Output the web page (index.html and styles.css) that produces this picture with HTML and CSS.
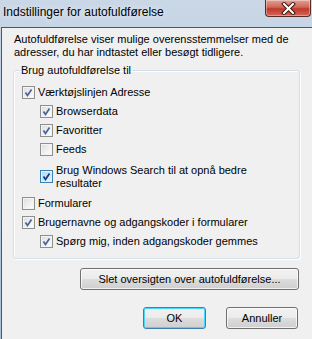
FILE: index.html
```html
<!DOCTYPE html>
<html lang="da">
<head>
  <meta charset="UTF-8">
  <title>Indstillinger for autofuldførelse</title>
  <link rel="stylesheet" href="styles.css">
</head>
<body>
  <div class="window">
    <!-- Title bar -->
    <div class="titlebar">
      <span class="title">Indstillinger for autofuldførelse</span>
      <button class="close-button" aria-label="Luk">
        <svg width="15" height="13" viewBox="0 0 15 13" aria-hidden="true">
          <path d="M3 2 L12 11 M12 2 L3 11" stroke="#3b1a14" stroke-width="4" stroke-linecap="square" fill="none"/>
          <path d="M3 2 L12 11 M12 2 L3 11" stroke="#ffffff" stroke-width="2" stroke-linecap="square" fill="none"/>
        </svg>
      </button>
    </div>

    <!-- Client area -->
    <div class="client">
      <p class="intro">Autofuldførelse viser mulige overensstemmelser med de adresser, du har indtastet eller besøgt tidligere.</p>

      <fieldset class="group">
        <legend class="group-title">Brug autofuldførelse til</legend>

        <label class="check-row">
          <span class="checkbox checked"></span>
          <span>Værktøjslinjen Adresse</span>
        </label>
        <label class="check-row indent">
          <span class="checkbox checked"></span>
          <span>Browserdata</span>
        </label>
        <label class="check-row indent">
          <span class="checkbox checked"></span>
          <span>Favoritter</span>
        </label>
        <label class="check-row indent">
          <span class="checkbox"></span>
          <span>Feeds</span>
        </label>
        <label class="check-row indent tall">
          <span class="checkbox checked hover"></span>
          <span>Brug Windows Search til at opnå bedre<br>resultater</span>
        </label>
        <label class="check-row">
          <span class="checkbox"></span>
          <span>Formularer</span>
        </label>
        <label class="check-row">
          <span class="checkbox checked"></span>
          <span>Brugernavne og adgangskoder i formularer</span>
        </label>
        <label class="check-row indent">
          <span class="checkbox checked"></span>
          <span>Spørg mig, inden adgangskoder gemmes</span>
        </label>
      </fieldset>

      <div class="button-row">
        <button class="button button-wide">Slet oversigten over autofuldførelse...</button>
      </div>

      <div class="button-row footer">
        <button class="button button-default button-ok">OK</button>
        <button class="button button-cancel">Annuller</button>
      </div>
    </div>
  </div>
</body>
</html>
```

FILE: styles.css
```css
:root {
  --frame-color: #b4c9df;
  --client-bg: #f0f0f0;
  --client-border: #4a5866;
  --text-color: #000;
}

body {
  margin: 0;
  padding: 0;
  font-family: "Liberation Sans", Arial, sans-serif;
  font-size: 11px;
  color: var(--text-color);
  background: var(--frame-color);
}

.window {
  width: 312px;
  height: 339px;
  display: flex;
  flex-direction: column;
  overflow: hidden;
  background: linear-gradient(180deg, #c9d7e6 0%, #bccde0 40%, #a9c1db 100%);
}

/* Title bar */
.titlebar {
  height: 27px;
  flex: none;
  display: flex;
  align-items: flex-start;
  justify-content: space-between;
}

.title {
  margin: 5px 0 0 3px;
  font-size: 12px;
  line-height: 15px;
  text-shadow: 0 0 6px rgba(255,255,255,0.9);
}

.close-button {
  width: 46px;
  height: 17px;
  margin-right: 1px;
  padding: 0;
  border: 1px solid #5a2a24;
  border-top: none;
  border-radius: 0 0 4px 4px;
  background: linear-gradient(180deg, #e3a196 0%, #cf6656 45%, #c0392b 55%, #d2675a 100%);
  box-shadow: inset 0 0 0 1px rgba(255,255,255,0.35);
  display: flex;
  align-items: center;
  justify-content: center;
}

/* Client area */
.client {
  flex: none;
  height: 308px;
  margin-left: 1px;
  border-top: 1px solid var(--client-border);
  border-left: 1px solid var(--client-border);
  border-bottom: 1px solid var(--client-border);
  background: var(--client-bg);
  padding: 5px 12px 0 11px;
  display: flex;
  flex-direction: column;
}

.intro {
  margin: 0 0 5px 1px;
  line-height: 13px;
}

/* Group box */
.group {
  margin: 0;
  padding: 6px 0 7px 8px;
  border: 1px solid #d5dfe5;
  border-radius: 3px;
  box-shadow: 1px 1px 0 #fff, inset 1px 1px 0 #fff;
}

.group-title {
  margin-left: -2px;
  padding: 0 1px;
  line-height: 13px;
}

.check-row {
  height: 19px;
  display: flex;
  align-items: center;
  gap: 3px;
  line-height: 13px;
}

.check-row.indent {
  margin-left: 18px;
}

.check-row.tall {
  height: 35px;
}

.checkbox {
  width: 11px;
  height: 11px;
  flex: none;
  border: 1px solid #8e8f8f;
  background: linear-gradient(135deg, #dcdcdc 0%, #f6f6f6 70%, #ffffff 100%);
  box-shadow: inset 0 0 0 1px #f4f4f4;
}

.checkbox.checked {
  background-image:
    url("data:image/svg+xml,%3Csvg xmlns='http://www.w3.org/2000/svg' width='11' height='11' viewBox='0 0 11 11'%3E%3Cpath d='M2.5 5.5 L4.5 8.5 L8.5 2.5' stroke='%234b6398' stroke-width='1.7' fill='none'/%3E%3C/svg%3E"),
    linear-gradient(135deg, #dcdcdc 0%, #f6f6f6 70%, #ffffff 100%);
}

.checkbox.hover {
  border-color: #3c7fb1;
  box-shadow: inset 0 0 0 1px #def0fb;
  background-image:
    url("data:image/svg+xml,%3Csvg xmlns='http://www.w3.org/2000/svg' width='11' height='11' viewBox='0 0 11 11'%3E%3Cpath d='M2.5 5.5 L4.5 8.5 L8.5 2.5' stroke='%23163c85' stroke-width='1.8' fill='none'/%3E%3C/svg%3E"),
    linear-gradient(135deg, #aed6f2 0%, #d6ecfa 70%, #eef7fd 100%);
}

/* Buttons */
.button-row {
  display: flex;
  justify-content: flex-end;
  gap: 20px;
  margin-top: 9px;
  padding-right: 1px;
}

.button-row.footer {
  margin-top: 17px;
  padding-right: 2px;
}

.button {
  height: 22px;
  padding: 0;
  font-family: inherit;
  font-size: 11px;
  color: var(--text-color);
  border: 1px solid #707070;
  border-radius: 3px;
  background: linear-gradient(180deg, #f2f2f2 0%, #ebebeb 49%, #dddddd 50%, #cfcfcf 100%);
  box-shadow: inset 0 0 0 1px rgba(255,255,255,0.7);
}

.button-wide {
  width: 219px;
}

.button-ok {
  width: 63px;
}

.button-cancel {
  width: 72px;
}

.button-default {
  border-color: #3c7fb1;
  box-shadow: inset 0 0 0 1px #48d8fb;
}
```
